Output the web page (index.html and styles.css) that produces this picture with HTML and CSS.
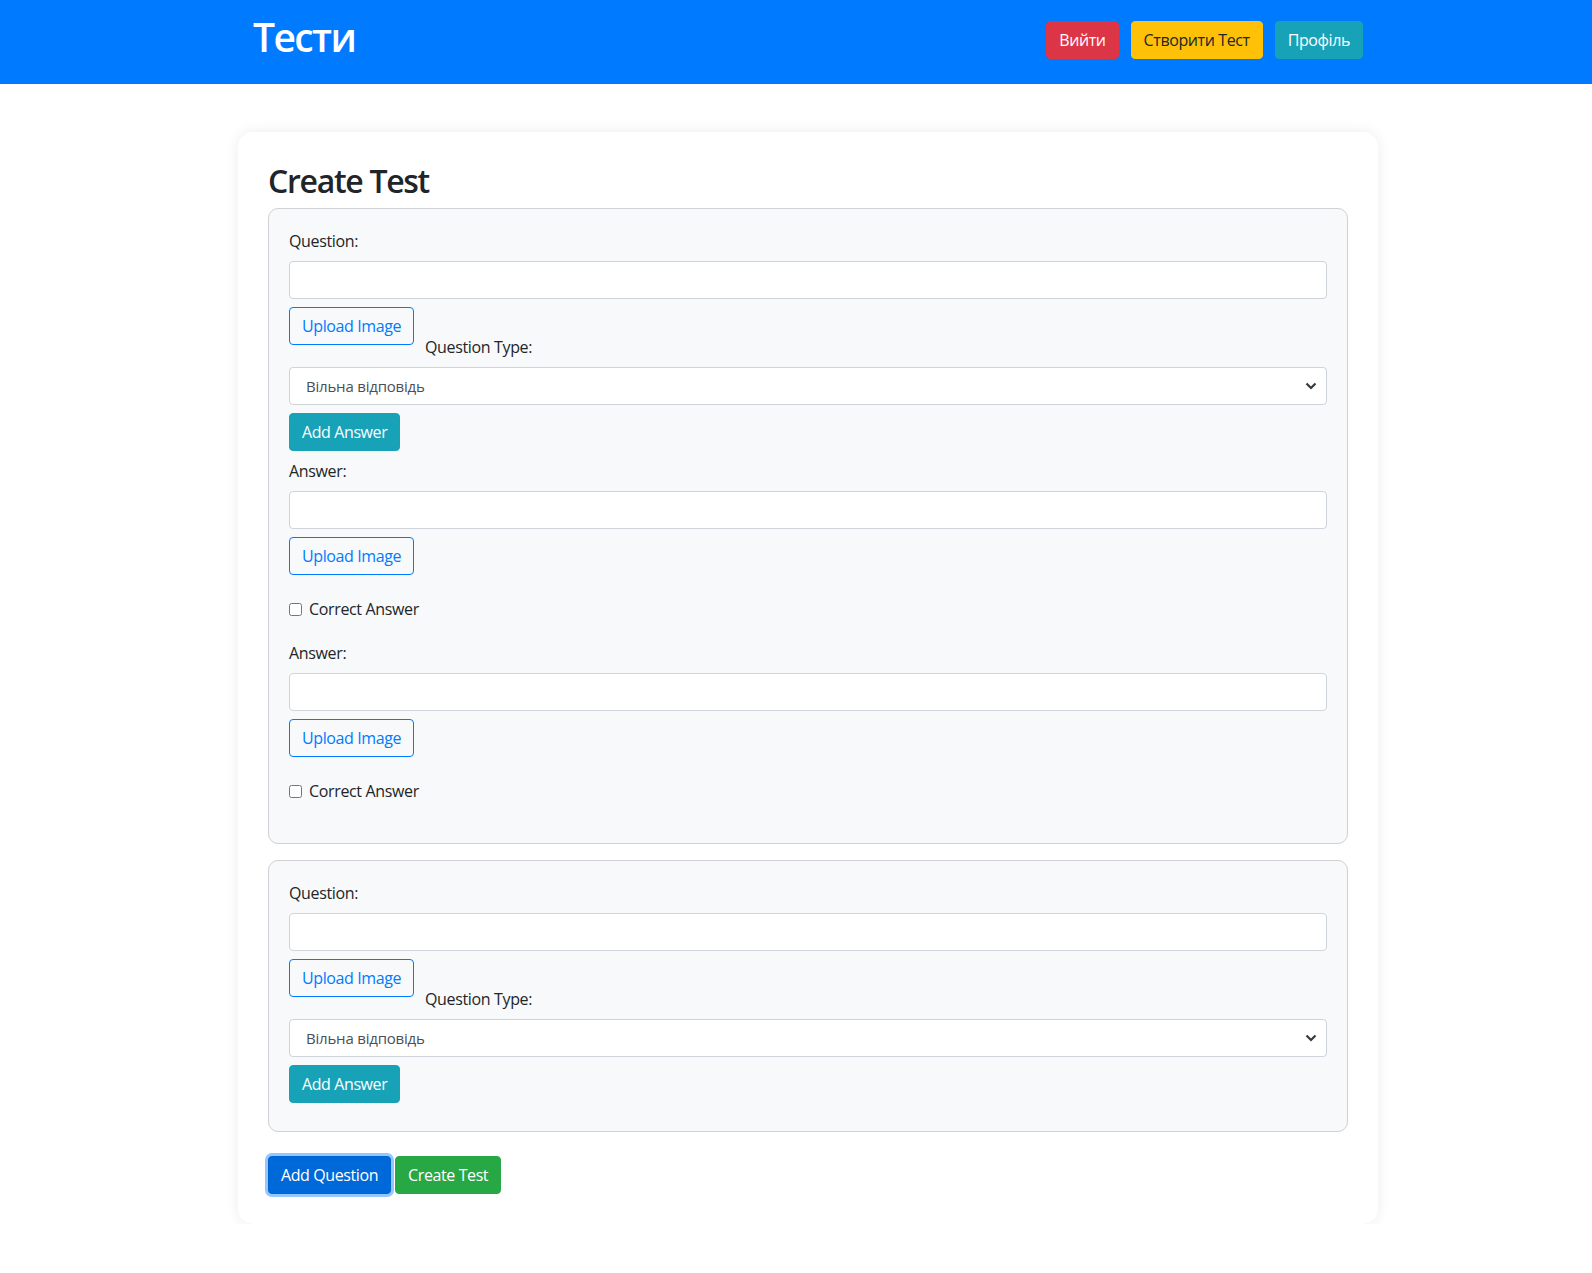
FILE: index.html
```html
<!DOCTYPE html>
<html lang="uk">
<head>
<meta charset="utf-8">
<title>Create Test</title>
<link rel="stylesheet" href="styles.css">
</head>
<body>
<nav class="navbar">
  <div class="shell">
    <div class="container nav-inner">
      <a class="brand" href="#">Тести</a>
      <div class="nav-actions">
        <button class="btn btn-danger">Вийти</button>
        <button class="btn btn-warning">Створити Тест</button>
        <button class="btn btn-info">Профіль</button>
      </div>
    </div>
  </div>
</nav>
<div class="shell">
  <main class="container card">
    <h2 class="title">Create Test</h2>

    <div class="question">
      <label class="field-label">Question:</label>
      <input class="form-control" type="text">
      <div class="upload-row">
        <button class="btn btn-outline">Upload Image</button>
        <label class="type-label">Question Type:</label>
      </div>
      <div class="select-wrap">
        <select class="form-select"><option>Вільна відповідь</option></select>
      </div>
      <button class="btn btn-info">Add Answer</button>
      <div class="answers">
        <div class="answer">
          <label class="field-label">Answer:</label>
          <input class="form-control" type="text">
          <button class="btn btn-outline">Upload Image</button>
          <label class="check-row"><input type="checkbox" class="check"><span>Correct Answer</span></label>
        </div>
        <div class="answer">
          <label class="field-label">Answer:</label>
          <input class="form-control" type="text">
          <button class="btn btn-outline">Upload Image</button>
          <label class="check-row"><input type="checkbox" class="check"><span>Correct Answer</span></label>
        </div>
      </div>
    </div>

    <div class="question">
      <label class="field-label">Question:</label>
      <input class="form-control" type="text">
      <div class="upload-row">
        <button class="btn btn-outline">Upload Image</button>
        <label class="type-label">Question Type:</label>
      </div>
      <div class="select-wrap">
        <select class="form-select"><option>Вільна відповідь</option></select>
      </div>
      <button class="btn btn-info">Add Answer</button>
      <div class="answers"></div>
    </div>

    <div class="form-actions">
      <button class="btn btn-primary focused">Add Question</button>
      <button class="btn btn-success">Create Test</button>
    </div>
  </main>
</div>
</body>
</html>
```

FILE: styles.css
```css
* { box-sizing: border-box; }

html, body {
  margin: 0;
  padding: 0;
  background: #fff;
}

body {
  font-family: "Open Sans", "Noto Sans", "Liberation Sans", sans-serif;
  font-size: 16px;
  line-height: 24px;
  color: #212529;
}

.shell {
  padding-left: 24px;
}

.container {
  max-width: 1140px;
  margin: 0 auto;
}

/* navbar */
.navbar {
  background: #007bff;
  height: 84px;
}

.nav-inner {
  display: flex;
  justify-content: space-between;
  align-items: flex-start;
  padding: 21px 15px 0;
}

.brand {
  font-size: 39px;
  line-height: 48px;
  font-weight: 600;
  color: #fff;
  text-decoration: none;
  margin-top: -8px;
  letter-spacing: -1.6px;
}

.nav-actions {
  display: flex;
  gap: 12px;
}

/* buttons */
.btn {
  display: inline-block;
  font-family: inherit;
  font-size: 16px;
  line-height: 24px;
  height: 38px;
  padding: 6px 12px;
  border: 1px solid transparent;
  border-radius: 4px;
  cursor: pointer;
  color: #fff;
  background: transparent;
  white-space: nowrap;
  letter-spacing: -0.4px;
}

.btn-danger { background: #dc3545; border-color: #dc3545; }
.btn-warning { background: #ffc107; border-color: #ffc107; color: #212529; }
.btn-info { background: #17a2b8; border-color: #17a2b8; }
.btn-success { background: #28a745; border-color: #28a745; }
.btn-primary { background: #0069d9; border-color: #0062cc; }
.btn-outline { color: #007bff; border-color: #007bff; background: transparent; }

.focused {
  box-shadow: 0 0 0 3px rgba(38, 143, 255, 0.5);
}

/* card */
.card {
  margin-top: 48px;
  background: #fff;
  border-radius: 15px;
  box-shadow: 0 0 14px rgba(0, 0, 0, 0.08);
  padding: 30px;
}

.title {
  margin: 0 0 8px;
  font-size: 32px;
  line-height: 38px;
  font-weight: 600;
  letter-spacing: -1.3px;
}

.question {
  background: #f8f9fa;
  border: 1px solid #cfd1d4;
  border-radius: 10px;
  padding: 20px;
  margin-bottom: 16px;
}

.field-label {
  display: block;
  margin-bottom: 8px;
  letter-spacing: -0.35px;
}

.form-control {
  display: block;
  width: 100%;
  height: 38px;
  padding: 6px 12px;
  font: inherit;
  color: #495057;
  background: #fff;
  border: 1px solid #ced4da;
  border-radius: 4px;
  margin: 0 0 8px;
}

.upload-row {
  display: flex;
  align-items: flex-start;
  margin-bottom: 8px;
}

.type-label {
  margin: 28px 0 0 11px;
  letter-spacing: -0.35px;
}

.select-wrap {
  margin-bottom: 8px;
}

.form-select {
  display: block;
  width: 100%;
  height: 38px;
  padding: 6px 30px 6px 16px;
  font: inherit;
  font-size: 15px;
  letter-spacing: -0.2px;
  color: #495057;
  background: #fff url("data:image/svg+xml,%3Csvg xmlns='http://www.w3.org/2000/svg' width='12' height='8' viewBox='0 0 12 8'%3E%3Cpath d='M1.5 1.5 6 6l4.5-4.5' fill='none' stroke='%23343a40' stroke-width='2.2'/%3E%3C/svg%3E") no-repeat right 9px center;
  border: 1px solid #ced4da;
  border-radius: 4px;
  appearance: none;
  -webkit-appearance: none;
}

.answers {
  margin-top: 8px;
}

.answer {
  margin-bottom: 20px;
}

.answer:first-child {
  margin-top: 2px;
}

.check-row {
  display: flex;
  align-items: center;
  margin-top: 22px;
  height: 24px;
  letter-spacing: -0.35px;
}

.check {
  width: 13px;
  height: 13px;
  margin: 0 7px 0 0;
}

.form-actions {
  margin-top: 24px;
  display: flex;
  gap: 4px;
}
```
